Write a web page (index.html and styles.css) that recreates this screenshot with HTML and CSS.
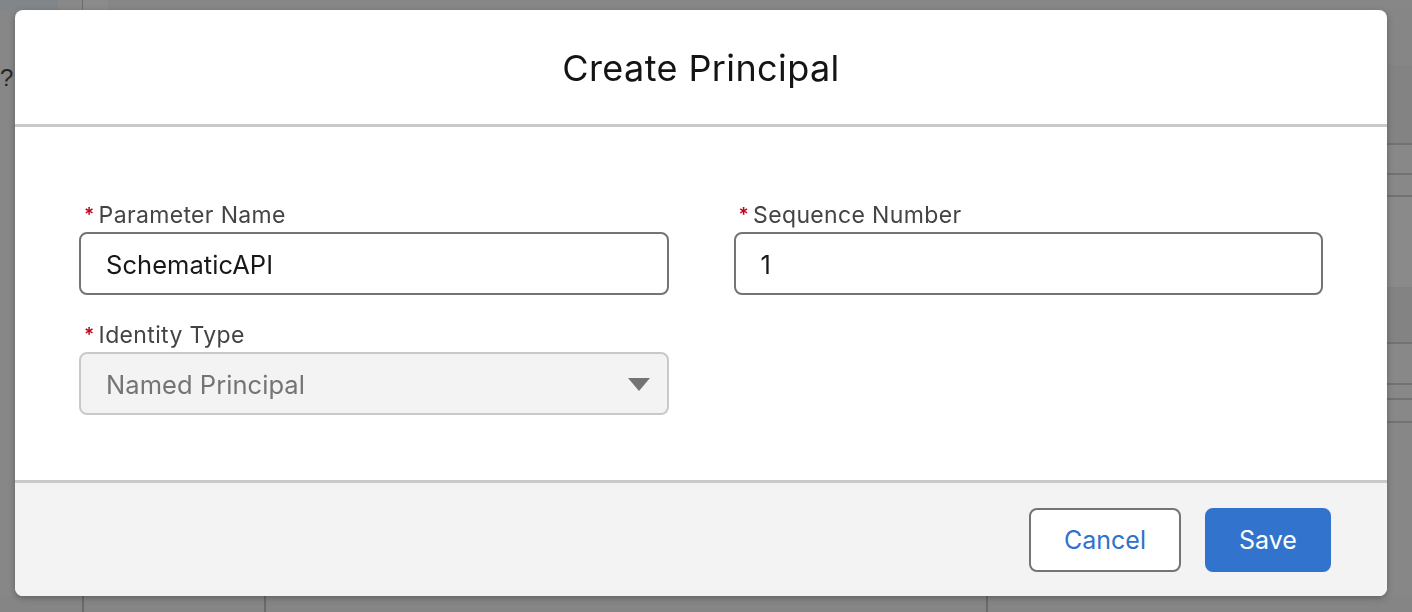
FILE: index.html
```html
<!DOCTYPE html>
<html lang="en">
<head>
<meta charset="utf-8">
<title>Create Principal</title>
<link rel="stylesheet" href="styles.css">
</head>
<body>
<div class="page">
  <div class="topbar">
    <div class="tb-a"></div>
    <div class="tb-b"></div>
    <div class="tb-c"></div>
  </div>
  <div class="middle">
    <div class="left-col"><span class="qmark">?</span></div>
    <div class="center-col"></div>
    <div class="right-col">
      <div class="rc r1"></div>
      <div class="rc r2"></div>
      <div class="rc r3"></div>
      <div class="rc r4"></div>
      <div class="rc r5"></div>
      <div class="rc r6"></div>
      <div class="rc r7"></div>
      <div class="rc r8"></div>
      <div class="rc r9"></div>
    </div>
  </div>
  <div class="bottombar">
    <div class="bb-a"></div>
    <div class="bb-b"></div>
    <div class="bb-c"></div>
  </div>
</div>

<div class="modal" role="dialog" aria-labelledby="modal-title">
  <header class="modal-header">
    <h2 id="modal-title" class="modal-title">Create Principal</h2>
  </header>
  <div class="modal-body">
    <div class="form-grid">
      <div class="field">
        <label class="field-label"><abbr class="required" title="required">*</abbr>Parameter Name</label>
        <div class="input">SchematicAPI</div>
      </div>
      <div class="field">
        <label class="field-label"><abbr class="required" title="required">*</abbr>Sequence Number</label>
        <div class="input">1</div>
      </div>
      <div class="field">
        <label class="field-label"><abbr class="required" title="required">*</abbr>Identity Type</label>
        <div class="select">
          <span class="select-value">Named Principal</span>
          <svg class="select-arrow" width="22" height="13" viewBox="0 0 22 13" aria-hidden="true"><path d="M0 0 H22 L11 13 Z" fill="#747474"/></svg>
        </div>
      </div>
    </div>
  </div>
  <footer class="modal-footer">
    <button class="btn btn-neutral" type="button">Cancel</button>
    <button class="btn btn-brand" type="button">Save</button>
  </footer>
</div>
</body>
</html>
```
FILE: styles.css
```css
* { box-sizing: border-box; }

html, body {
  margin: 0;
  padding: 0;
  height: 100%;
}

body {
  font-family: Inter, "Noto Sans", "Liberation Sans", sans-serif;
  background: #878787;
  overflow: hidden;
}

/* dimmed page behind the dialog */
.page {
  height: 612px;
  display: flex;
  flex-direction: column;
  background: #878787;
}

.topbar {
  height: 10px;
  display: flex;
  flex: none;
}
.tb-a { width: 58px; background: #80868a; }
.tb-b { width: 25px; background: #898989; border-right: 1px solid #6d6d6d; }
.tb-c { width: 25px; background: #8b8b8b; }

.middle {
  flex: 1;
  display: flex;
}
.left-col {
  width: 15px;
  padding-top: 54px;
}
.qmark {
  display: block;
  font-family: "Liberation Sans", sans-serif;
  font-size: 24px;
  color: #262626;
  line-height: 28px;
  margin-left: 0;
}
.center-col { flex: 1; }
.right-col {
  width: 25px;
  display: flex;
  flex-direction: column;
}
.rc { border-bottom: 2px solid #727272; }
.r1 { height: 55px; border-bottom: none; background: #868686; }
.r2 { height: 80px; background: #838383; }
.r3 { height: 30px; background: #888888; }
.r4 { height: 22px; background: #888888; }
.r5 { height: 90px; background: #8a8a8a; border-bottom: none; }
.r6 { height: 57px; background: #838383; }
.r7 { height: 41px; background: #888888; }
.r8 { height: 15px; background: #888888; }
.r9 { height: 23px; background: #888888; }

.bottombar {
  height: 16px;
  display: flex;
  flex: none;
  background: #858585;
}
.bb-a { width: 84px; border-right: 2px solid #6a6a6a; }
.bb-b { width: 182px; border-right: 2px solid #6a6a6a; }
.bb-c { width: 722px; border-right: 2px solid #6a6a6a; }

/* dialog */
.modal {
  position: fixed;
  left: 15px;
  top: 10px;
  width: 1372px;
  background: #ffffff;
  border-radius: 8px;
  box-shadow: 0 2px 6px rgba(0, 0, 0, 0.28);
  display: flex;
  flex-direction: column;
}

.modal-header {
  height: 117px;
  border-bottom: 3px solid #c9c9c9;
  display: flex;
  align-items: center;
  justify-content: center;
  padding-top: 1px;
}

.modal-title {
  margin: 0;
  font-size: 36px;
  font-weight: 400;
  color: #141414;
  letter-spacing: 0.4px;
}

.modal-body {
  padding: 73px 64px 65px;
}

.form-grid {
  display: grid;
  grid-template-columns: 1fr 1fr;
  column-gap: 65px;
  row-gap: 25px;
}

.field {
  display: flex;
  flex-direction: column;
  gap: 4px;
}

.field-label {
  display: flex;
  align-items: flex-start;
  height: 28px;
  line-height: 30px;
  font-size: 23px;
  letter-spacing: 0.35px;
  color: #444444;
  padding-left: 5px;
}

.required {
  text-decoration: none;
  border: 0;
  color: #ba0517;
  font-size: 19px;
  font-weight: 600;
  line-height: 22px;
  margin-top: 4px;
  margin-right: 4px;
}

.input,
.select {
  height: 63px;
  border: 2px solid #747474;
  border-radius: 8px;
  padding: 2px 24px 0 25px;
  display: flex;
  align-items: center;
  font-size: 25.5px;
  letter-spacing: 0.05px;
  color: #181818;
  background: #ffffff;
}

.select {
  border-color: #c9c9c9;
  background: #f3f3f3;
  color: #747474;
  justify-content: space-between;
  padding-right: 17px;
}

.select-arrow { display: block; }

.modal-footer {
  border-top: 3px solid #c9c9c9;
  background: #f3f3f3;
  border-radius: 0 0 8px 8px;
  height: 116px;
  padding: 25px 56px 24px;
  display: flex;
  justify-content: flex-end;
  align-items: flex-start;
  gap: 24px;
}

.btn {
  height: 64px;
  border-radius: 8px;
  font-family: inherit;
  font-size: 25px;
  line-height: 1;
  padding-top: 2px;
  cursor: pointer;
}

.btn-neutral {
  width: 152px;
  background: #ffffff;
  border: 2px solid #747474;
  color: #2f72cc;
}

.btn-brand {
  width: 126px;
  background: #3274cd;
  border: 2px solid #3274cd;
  color: #ffffff;
}
```
